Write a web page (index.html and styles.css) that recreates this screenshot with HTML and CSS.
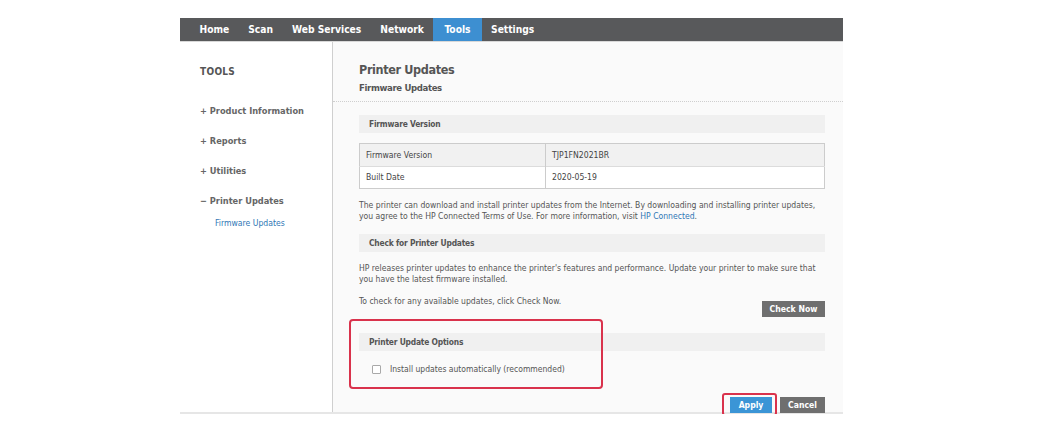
FILE: index.html
```html
<!DOCTYPE html>
<html>
<head>
<meta charset="utf-8">
<link rel="stylesheet" href="styles.css">
</head>
<body>
<div class="frame">
  <nav class="topnav">
    <span class="tab">Home</span>
    <span class="tab">Scan</span>
    <span class="tab">Web Services</span>
    <span class="tab">Network</span>
    <span class="tab active">Tools</span>
    <span class="tab">Settings</span>
  </nav>
  <div class="body">
    <aside class="sidebar">
      <div class="side-title">TOOLS</div>
      <ul class="side-list">
        <li class="side-item">+ Product Information</li>
        <li class="side-item">+ Reports</li>
        <li class="side-item">+ Utilities</li>
        <li class="side-item open">&minus; Printer Updates</li>
      </ul>
      <div class="side-sub">Firmware Updates</div>
    </aside>
    <main class="main">
      <header class="page-head">
        <h1 class="page-title">Printer Updates</h1>
        <h2 class="page-sub">Firmware Updates</h2>
      </header>
      <div class="content">
        <div class="band">Firmware Version</div>
        <table class="info">
          <tr class="shade"><td class="c1">Firmware Version</td><td>TJP1FN2021BR</td></tr>
          <tr><td class="c1">Built Date</td><td>2020-05-19</td></tr>
        </table>
        <p class="text p1">The printer can download and install printer updates from the Internet. By downloading and installing printer updates, you agree to the HP Connected Terms of Use. For more information, visit <span class="link">HP Connected</span>.</p>
        <div class="band b2">Check for Printer Updates</div>
        <p class="text p2">HP releases printer updates to enhance the printer's features and performance. Update your printer to make sure that you have the latest firmware installed.</p>
        <div class="check-row">
          <p class="text">To check for any available updates, click Check Now.</p>
          <button class="btn gray check">Check Now</button>
        </div>
        <section class="options">
          <div class="band">Printer Update Options</div>
          <label class="opt"><span class="box"></span>Install updates automatically (recommended)</label>
          <div class="mark mark-opt"></div>
        </section>
        <div class="actions">
          <button class="btn blue apply">Apply<span class="mark mark-apply"></span></button>
          <button class="btn gray">Cancel</button>
        </div>
      </div>
    </main>
  </div>
</div>
</body>
</html>
```

FILE: styles.css
```css
* { box-sizing: border-box; }
html, body { margin: 0; padding: 0; background: #fff; }
body {
  font-family: "DejaVu Sans Condensed", "Liberation Sans", sans-serif;
  font-stretch: condensed;
  color: #4a4a4a;
  padding: 18px 0 0 180px;
}
.frame { width: 663px; }
.topnav {
  display: flex;
  background: #58595b;
  padding-left: 10px;
  border-bottom: 1px solid #d8d8d8;
  height: 24px;
}
.tab {
  color: #fff;
  font-weight: bold;
  font-size: 10.2px;
  line-height: 23px;
  padding: 0 9.5px;
}
.tab.active { background: #3d8fd1; padding: 0 11px; }
.body {
  display: flex;
  height: 372px;
  border-bottom: 2px solid #e6e6e6;
}
.sidebar {
  width: 153px;
  border-right: 1px solid #cfcfcf;
  padding: 23px 0 0 20px;
  background: #fff;
}
.side-title {
  font-size: 10px;
  font-weight: bold;
  line-height: 14px;
  color: #555;
  letter-spacing: 0.3px;
}
.side-list { list-style: none; margin: 17px 0 0; padding: 0; }
.side-item {
  font-size: 9.2px;
  font-weight: bold;
  line-height: 30px;
  height: 30px;
  color: #666;
}
.side-sub {
  font-size: 8.6px;
  color: #2f77b5;
  line-height: 14px;
  padding-left: 15px;
}
.main { flex: 1; background: #fafafa; }
.page-head {
  padding: 19px 0 6px 26px;
  border-bottom: 1px dotted #cfcfcf;
}
.page-title {
  margin: 0;
  font-size: 12.5px;
  letter-spacing: -0.35px;
  line-height: 18px;
  color: #555;
}
.page-sub {
  margin: 2px 0 0;
  font-size: 9.5px;
  letter-spacing: -0.35px;
  line-height: 14px;
  color: #555;
}
.content { padding: 13px 18px 0 26px; }
.band {
  background: #f0f0f0;
  height: 18px;
  line-height: 18px;
  padding-left: 10px;
  font-size: 8.4px;
  letter-spacing: -0.2px;
  font-weight: bold;
  color: #555;
}
.info {
  margin-top: 10px;
  width: 100%;
  border-collapse: collapse;
  border: 1px solid #cccccc;
  font-size: 8.6px;
  color: #444;
}
.info td { height: 22.5px; padding: 0 6px; }
.info .c1 { width: 186px; border-right: 1px solid #cccccc; }
.info tr.shade { background: #f1f1f1; border-bottom: 1px solid #dcdcdc; }
.info tr:last-child { background: #fff; }
.text {
  margin: 0;
  font-size: 8.55px;
  line-height: 11px;
  color: #555;
}
.p1 { margin-top: 11px; }
.link { color: #2f77b5; }
.b2 { margin-top: 12px; }
.p2 { margin-top: 11px; }
.check-row {
  display: flex;
  justify-content: space-between;
  align-items: flex-start;
  margin-top: 11px;
}
.btn {
  border: 0;
  color: #fff;
  font-family: inherit;
  font-stretch: condensed;
  font-weight: bold;
  font-size: 8.6px;
  height: 16px;
  padding: 0;
  position: relative;
}
.gray { background: #6f6f6f; }
.blue { background: #3b95d6; }
.check { width: 63px; margin-top: 5px; }
.options { position: relative; margin-top: 16px; }
.opt {
  display: flex;
  align-items: center;
  font-size: 8.5px;
  color: #555;
  margin-top: 12px;
  padding-left: 13px;
  height: 12px;
}
.box {
  width: 9px;
  height: 9px;
  border: 1px solid #a9a9a9;
  background: #fff;
  margin-right: 9px;
  border-radius: 1px;
}
.actions {
  display: flex;
  justify-content: flex-end;
  gap: 8px;
  margin-top: 22px;
}
.apply { width: 42px; }
.actions .gray { width: 45px; }
.mark {
  position: absolute;
  border: 2.5px solid #d9324c;
  border-radius: 4px;
  pointer-events: none;
}
.mark-opt { left: -10px; top: -14px; width: 254px; height: 70px; }
.mark-apply { left: -8px; top: -4px; width: 55px; height: 23px; border-radius: 3px; }
```
